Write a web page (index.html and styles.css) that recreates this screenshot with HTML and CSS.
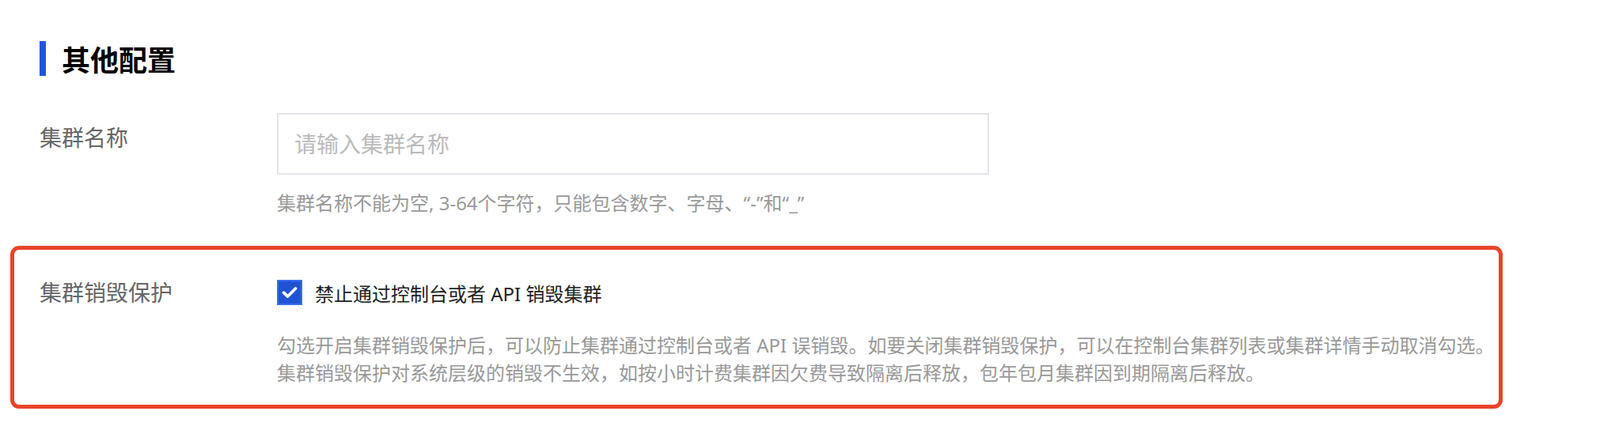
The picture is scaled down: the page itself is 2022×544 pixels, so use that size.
FILE: index.html
```html
<!DOCTYPE html>
<html lang="zh-CN">
<head>
<meta charset="utf-8">
<title>其他配置</title>
<link rel="stylesheet" href="styles.css">
</head>
<body>
<div class="page">
  <h2 class="section-title">其他配置</h2>

  <div class="form-row">
    <div class="form-label">集群名称</div>
    <div class="form-control">
      <input class="text-input" type="text" placeholder="请输入集群名称">
      <div class="hint">集群名称不能为空, 3-64个字符，只能包含数字、字母、“-”和“_”</div>
    </div>
  </div>

  <div class="form-row highlight">
    <div class="form-label">集群销毁保护</div>
    <div class="form-control">
      <label class="checkbox-line">
        <span class="checkbox">
          <svg width="20" height="16" viewBox="0 0 20 16"><path d="M2.5 8.2 L7.6 13 L17.5 3" fill="none" stroke="#fff" stroke-width="3.8" stroke-linecap="round" stroke-linejoin="round"/></svg>
        </span>
        <span class="checkbox-text">禁止通过控制台或者 API 销毁集群</span>
      </label>
      <div class="desc">
        <div class="desc-line">勾选开启集群销毁保护后，可以防止集群通过控制台或者 API 误销毁。如要关闭集群销毁保护，可以在控制台集群列表或集群详情手动取消勾选。</div>
        <div class="desc-line">集群销毁保护对系统层级的销毁不生效，如按小时计费集群因欠费导致隔离后释放，包年包月集群因到期隔离后释放。</div>
      </div>
    </div>
  </div>
</div>
</body>
</html>
```

FILE: styles.css
```css
* {
  box-sizing: border-box;
}

body {
  margin: 0;
  background: #ffffff;
  font-family: "Noto Sans", "Noto Sans CJK SC", sans-serif;
}

.page {
  padding: 52px 123px 0 50px;
}

.section-title {
  margin: 0;
  height: 44px;
  line-height: 44px;
  border-left: 8px solid #2355d8;
  padding-left: 20px;
  font-family: "Noto Sans CJK SC", sans-serif;
  font-size: 36px;
  font-weight: 700;
  color: #000000;
}

.form-row {
  display: flex;
  margin-top: 47px;
}

.form-label {
  width: 300px;
  flex: none;
  font-size: 28px;
  line-height: 40px;
  padding-top: 11px;
  color: #666666;
}

.form-control {
  flex: 1;
  min-width: 0;
}

.text-input {
  display: block;
  width: 900px;
  height: 78px;
  border: 2px solid #e2e5eb;
  border-radius: 0;
  padding: 0 20px;
  font-family: inherit;
  font-size: 28px;
  color: #333;
  outline: none;
  background: #fff;
}

.text-input::placeholder {
  color: #bbbbbb;
}

.hint {
  margin-top: 18px;
  font-size: 24px;
  line-height: 35px;
  color: #999999;
}

.highlight {
  margin-top: 37px;
  margin-left: -37px;
  border: 5px solid #e9442b;
  border-radius: 11px;
  padding: 33px 0 23px 32px;
}

.highlight .form-label {
  padding-top: 0;
  line-height: 42px;
}

.checkbox-line {
  display: flex;
  align-items: center;
  height: 42px;
  gap: 16px;
}

.checkbox {
  width: 32px;
  height: 32px;
  flex: none;
  background: #2152d4;
  border: 2px solid #3b6ef0;
  display: flex;
  align-items: center;
  justify-content: center;
}

.checkbox-text {
  font-size: 24px;
  color: #222222;
}

.desc {
  margin-top: 28px;
  font-size: 24px;
  line-height: 35px;
  color: #999999;
}

.desc-line {
  white-space: nowrap;
}
```
